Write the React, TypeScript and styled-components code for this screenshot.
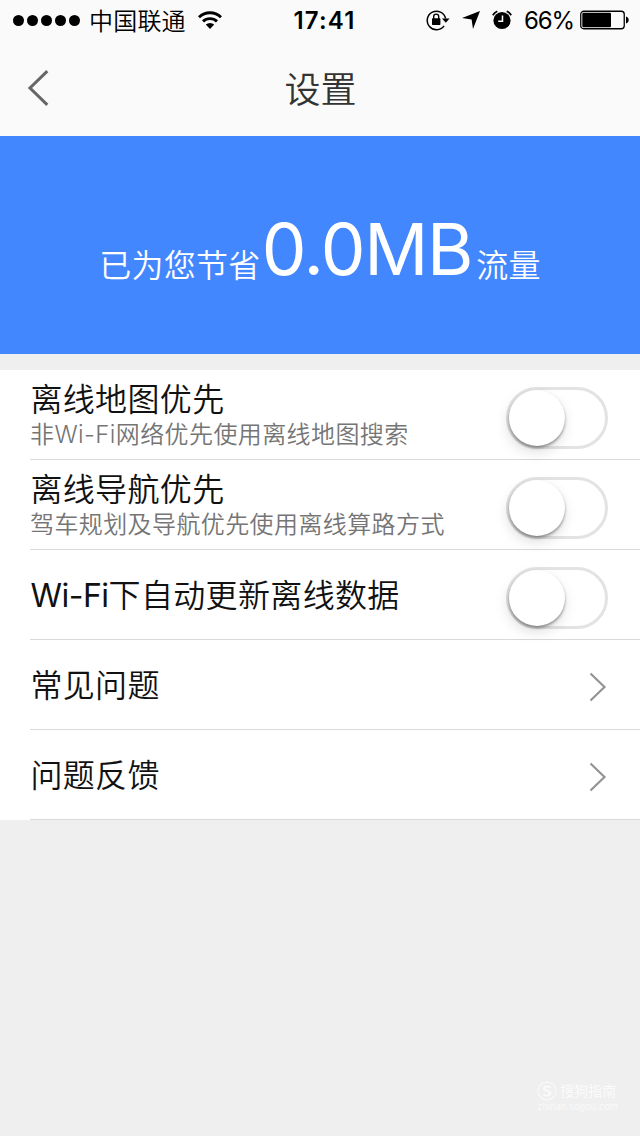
import React from "react";
import styled, { createGlobalStyle } from "styled-components";

const GlobalStyle = createGlobalStyle`
  * { box-sizing: border-box; }
  body {
    margin: 0;
    background: #efefef;
    font-family: Inter, "Noto Sans CJK SC", sans-serif;
  }
`;

const cjkDemiLight = `Inter, "Noto Sans CJK SC DemiLight", "Noto Sans CJK SC", sans-serif`;

const Screen = styled.main`
  width: 640px;
  height: 1136px;
  display: flex;
  flex-direction: column;
  background: #efefef;
  overflow: hidden;
`;

const StatusBar = styled.div`
  height: 40px;
  display: grid;
  grid-template-columns: 1fr auto 1fr;
  align-items: center;
  padding: 0 11px 0 13px;
  background: #fafafa;
  color: #000;
`;

const StatusGroup = styled.div<{ $end?: boolean }>`
  display: flex;
  align-items: center;
  justify-content: ${(p) => (p.$end ? "flex-end" : "flex-start")};
`;

const SignalDots = styled.div`
  display: flex;
  gap: 3px;
  margin-right: 9px;
`;

const Dot = styled.i`
  width: 11px;
  height: 11px;
  border-radius: 50%;
  background: #000;
`;

const Carrier = styled.span`
  font-family: ${cjkDemiLight};
  font-weight: 350;
  font-size: 24px;
  line-height: 36px;
  padding-top: 4px;
  letter-spacing: 0.2px;
  margin-right: 12px;
`;

const Clock = styled.time`
  font-size: 24px;
  line-height: 38px;
  padding: 2px 0 0 7px;
  font-weight: 600;
  letter-spacing: 1.2px;
`;

const Percent = styled.span`
  font-size: 24px;
  line-height: 38px;
  padding-top: 2px;
  margin: 0 6px 0 12px;
  letter-spacing: -1.1px;
`;

const Icon = styled.svg<{ $gap?: number }>`
  display: block;
  flex: none;
  margin-right: ${(p) => p.$gap ?? 0}px;
`;

const NavBar = styled.header`
  height: 96px;
  display: grid;
  grid-template-columns: 100px 1fr 100px;
  align-items: center;
  background: #fafafa;
`;

const BackButton = styled.button`
  width: 100px;
  height: 96px;
  padding: 0 0 0 27px;
  border: 0;
  background: none;
`;

const Title = styled.h1`
  margin: 0;
  padding: 5px 0 0 1px;
  text-align: center;
  font-family: ${cjkDemiLight};
  font-size: 36px;
  line-height: 91px;
  font-weight: 350;
  color: #333;
`;

const Banner = styled.section`
  height: 218px;
  display: flex;
  align-items: baseline;
  justify-content: center;
  padding-top: 68px;
  background: #4387ff;
  color: #fff;
`;

const BannerLabel = styled.span`
  font-family: ${cjkDemiLight};
  font-weight: 350;
  font-size: 32px;
  letter-spacing: 0.3px;
  transform: translateY(2px);
`;

const Amount = styled.strong`
  font-size: 71px;
  line-height: 90px;
  font-weight: 400;
  letter-spacing: -1.3px;
  margin: 0 4px 0 1px;
`;

const List = styled.section`
  margin-top: 16px;
  padding-left: 30px;
  background: #fff;
`;

const Row = styled.div`
  height: 90px;
  display: flex;
  align-items: center;
  justify-content: space-between;
  padding-right: 32px;
  border-bottom: 1px solid #d9d9d9;
`;

const RowText = styled.div`
  display: flex;
  flex-direction: column;
  padding-top: 2px;
`;

const RowTitle = styled.span`
  font-family: ${cjkDemiLight};
  font-size: 32px;
  line-height: 38px;
  letter-spacing: 0.35px;
  padding-left: 0.4px;
  font-weight: 350;
  color: #111;
  white-space: nowrap;
`;

const Latin = styled.span`
  font-weight: 400;
  letter-spacing: -0.5px;
`;

const RowNote = styled.span`
  font-family: ${cjkDemiLight};
  font-size: 24px;
  line-height: 32px;
  letter-spacing: 0.4px;
  color: #757575;
  font-weight: 350;
  white-space: nowrap;
`;

const Switch = styled.button`
  width: 102px;
  height: 62px;
  margin-top: 7px;
  padding: 0;
  display: flex;
  align-items: center;
  border: 3px solid #e3e3e3;
  border-radius: 31px;
  background: #fff;
`;

const Knob = styled.span`
  width: 56px;
  height: 56px;
  border-radius: 50%;
  background: #fff;
  box-shadow: 0 2px 3px rgba(0, 0, 0, 0.38), -1px 6px 14px rgba(0, 0, 0, 0.13);
`;

const Watermark = styled.footer`
  margin: auto 22px 23px auto;
  display: grid;
  grid-template-columns: 20px auto;
  column-gap: 3px;
  align-items: center;
  color: #fbfbfb;
  font-size: 14px;
  line-height: 20px;
`;

const WatermarkUrl = styled.span`
  grid-column: 1 / 3;
  font-size: 9.3px;
  line-height: 12px;
  color: #f9f9f9;
`;

const RowChevron = styled(Icon)`
  margin-top: 5px;
  transform: translateX(0.5px);
`;

const Chevron = () => (
  <RowChevron width="20" height="30" viewBox="0 0 20 30">
    <path d="M2 1.5 16 15 2 28.5" fill="none" stroke="#949494" strokeWidth="2.2" />
  </RowChevron>
);

type Item = { latin?: string; title: string; note?: string; toggle?: boolean };

const items: Item[] = [
  { title: "离线地图优先", note: "非Wi-Fi网络优先使用离线地图搜索", toggle: true },
  { title: "离线导航优先", note: "驾车规划及导航优先使用离线算路方式", toggle: true },
  { latin: "Wi-Fi", title: "下自动更新离线数据", toggle: true },
  { title: "常见问题" },
  { title: "问题反馈" },
];

export default function App() {
  return (
    <Screen>
      <GlobalStyle />
      <StatusBar>
        <StatusGroup>
          <SignalDots>
            {[0, 1, 2, 3, 4].map((n) => (
              <Dot key={n} />
            ))}
          </SignalDots>
          <Carrier>中国联通</Carrier>
          <Icon width="24" height="18" viewBox="0 0 24 18">
            <g fill="none" stroke="#000" strokeWidth="2.9">
              <path d="M1 6.2a16 16 0 0 1 22 0" />
              <path d="M5 10.4a10.2 10.2 0 0 1 14 0" />
            </g>
            <path d="M12 18 7.8 13.6a6 6 0 0 1 8.4 0z" />
          </Icon>
        </StatusGroup>
        <Clock>17:41</Clock>
        <StatusGroup $end>
          <Icon width="24" height="22" viewBox="0 0 24 22" $gap={12}>
            <path d="M18.1 16.9A9.3 9.3 0 1 1 19.6 9.5" fill="none" stroke="#000" strokeWidth="1.5" />
            <path d="M16 9.5h7.6l-3.8 4.3z" />
            <rect x="6" y="9.3" width="8.4" height="6.6" rx=".6" />
            <path d="M7.7 10V7.6a2.5 2.5 0 0 1 5 0V10" fill="none" stroke="#000" strokeWidth="1.4" />
          </Icon>
          <Icon width="18" height="18" viewBox="0 0 18 18" $gap={12}>
            <path d="M18 0 11 18 9.6 8.6 0 7z" />
          </Icon>
          <Icon width="20" height="20" viewBox="0 0 20 20">
            <circle cx="10" cy="10.5" r="8.6" />
            <path d="M.8 5.2A10 10 0 0 1 5.3 1.2M19.2 5.2A10 10 0 0 0 14.7 1.2" fill="none" stroke="#000" strokeWidth="1.8" />
            <path d="M10.5 5.5v5.7H6.2" fill="none" stroke="#fff" strokeWidth="1.5" />
          </Icon>
          <Percent>66%</Percent>
          <Icon width="49" height="20" viewBox="0 0 49 20">
            <rect x=".75" y="1.25" width="43.5" height="17.5" rx="3" fill="none" stroke="#000" strokeWidth="1.3" />
            <rect x="2.3" y="2.8" width="28.7" height="14.4" rx="1.2" />
            <path d="M46 6.6c1.5.3 2.7 1.7 2.7 3.4s-1.2 3.1-2.7 3.4z" />
          </Icon>
        </StatusGroup>
      </StatusBar>

      <NavBar>
        <BackButton aria-label="返回">
          <Icon width="22" height="36" viewBox="0 0 22 36">
            <path d="M20.3 1.2 3 18l17.3 16.8" fill="none" stroke="#666" strokeWidth="3" />
          </Icon>
        </BackButton>
        <Title>设置</Title>
      </NavBar>

      <Banner>
        <BannerLabel>已为您节省</BannerLabel>
        <Amount>0.0MB</Amount>
        <BannerLabel>流量</BannerLabel>
      </Banner>

      <List>
        {items.map((item) => (
          <Row key={item.title}>
            <RowText>
              <RowTitle>
                {item.latin && <Latin>{item.latin}</Latin>}
                {item.title}
              </RowTitle>
              {item.note && <RowNote>{item.note}</RowNote>}
            </RowText>
            {item.toggle ? (
              <Switch role="switch" aria-checked={false} aria-label={item.title}>
                <Knob />
              </Switch>
            ) : (
              <Chevron />
            )}
          </Row>
        ))}
      </List>

      <Watermark>
        <Icon width="20" height="20" viewBox="0 0 20 20">
          <circle cx="10" cy="10" r="9" fill="none" stroke="#f7f7f7" strokeWidth="1.5" />
          <path d="M13.5 6.8C12.5 5 7 4.8 7 7.6c0 2.7 6.5 1.8 6.5 4.7 0 3-6 2.9-7 .9" fill="none" stroke="#fafafa" strokeWidth="2" />
        </Icon>
        <span>搜狗指南</span>
        <WatermarkUrl>zhinan.sogou.com</WatermarkUrl>
      </Watermark>
    </Screen>
  );
}
